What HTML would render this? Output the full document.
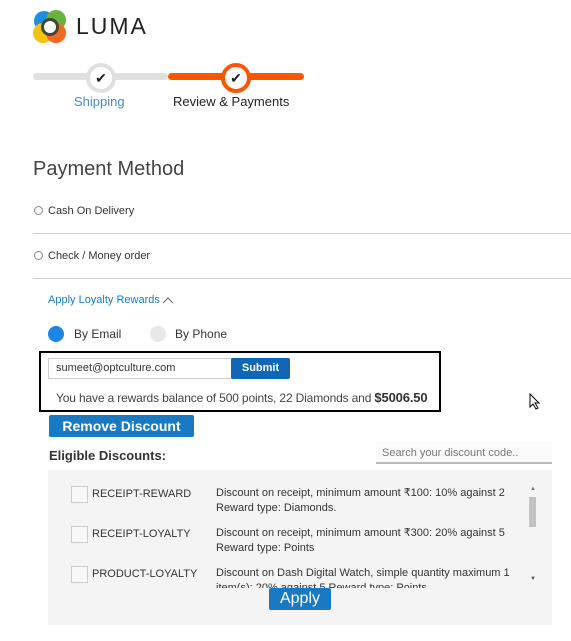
<!DOCTYPE html>
<html><head><style>
body{margin:0;width:571px;height:641px;background:#fff;font-family:"Liberation Sans",sans-serif;position:relative;overflow:hidden;color:#333}
.a{position:absolute;white-space:nowrap}
.sm{font-size:11px}
</style></head><body>
<!-- logo -->
<svg class="a" style="left:33px;top:10px" width="34" height="34" viewBox="0 0 34 34">
<circle cx="11" cy="11" r="10" fill="#1f8ee0"/><circle cx="23" cy="10" r="10" fill="#6ab23f"/>
<circle cx="10" cy="23" r="10" fill="#f4c312"/><circle cx="23" cy="23" r="10" fill="#f26a22"/>
<circle cx="17" cy="17" r="9" fill="#3a4a3a"/><circle cx="17" cy="17" r="6" fill="#fff"/>
</svg>
<div class="a" style="left:76px;top:13px;font-size:23px;letter-spacing:2px;color:#222">LUMA</div>
<!-- progress -->
<div class="a" style="left:33px;top:73px;width:135px;height:7px;background:#e0e0e0;border-radius:4px"></div>
<div class="a" style="left:168px;top:73px;width:136px;height:7px;background:#ff5500;border-radius:4px"></div>
<div class="a" style="left:86px;top:63px;width:22px;height:22px;border-radius:50%;background:#fff;border:4px solid #e0e0e0;text-align:center;line-height:22px;font-size:14px;color:#222">✔</div>
<div class="a" style="left:221px;top:63px;width:22px;height:22px;border-radius:50%;background:#fff;border:4px solid #ff5500;text-align:center;line-height:22px;font-size:14px;color:#222">✔</div>
<div class="a" style="left:74px;top:94px;font-size:13px;color:#4e8bc2">Shipping</div>
<div class="a" style="left:173px;top:94px;font-size:13px;color:#222">Review &amp; Payments</div>
<div class="a" style="left:33px;top:158px;font-size:20px;color:#444">Payment Method</div>
<div class="a" style="left:34px;top:206px;width:7px;height:7px;border:1px solid #888;border-radius:50%"></div>
<div class="a sm" style="left:48px;top:205px">Cash On Delivery</div>
<div class="a" style="left:33px;top:233px;width:538px;height:1px;background:#ccc"></div>
<div class="a" style="left:34px;top:251px;width:7px;height:7px;border:1px solid #888;border-radius:50%"></div>
<div class="a sm" style="left:48px;top:250px">Check / Money order</div>
<div class="a" style="left:33px;top:278px;width:538px;height:1px;background:#ccc"></div>
<div class="a sm" style="left:48px;top:294px;color:#1979c3">Apply Loyalty Rewards</div>
<svg class="a" style="left:162px;top:296px" width="12" height="8" viewBox="0 0 12 8"><path d="M1 7 L6 2 L11 7" fill="none" stroke="#777" stroke-width="1.2"/></svg>
<div class="a" style="left:48px;top:326px;width:16px;height:16px;border-radius:50%;background:#1a86e8"></div>
<div class="a" style="left:74px;top:327px;font-size:12px">By Email</div>
<div class="a" style="left:150px;top:326px;width:16px;height:16px;border-radius:50%;background:#e8e8e8"></div>
<div class="a" style="left:175px;top:327px;font-size:12px">By Phone</div>
<!-- box -->
<div class="a" style="left:39px;top:351px;width:398px;height:57px;border:2px solid #000"></div>
<div class="a" style="left:48px;top:358px;width:184px;height:21px;border:1px solid #ccc;box-sizing:border-box;font-size:11px;line-height:19px;padding-left:7px">sumeet@optculture.com</div>
<div class="a" style="left:231px;top:358px;width:59px;height:21px;background:#1165b5;border-radius:2px;color:#fff;font-size:11px;font-weight:bold;text-align:center;line-height:21px">Submit</div>
<div class="a" style="left:56px;top:390px;font-size:12px;color:#444;letter-spacing:-0.15px">You have a rewards balance of 500 points, 22 Diamonds and <b style="font-size:13px;color:#333">$5006.50</b></div>
<div class="a" style="left:49px;top:415px;width:145px;height:22px;background:#1979c3;border-radius:2px;color:#fff;font-size:14px;font-weight:bold;text-align:center;line-height:22px">Remove Discount</div>
<div class="a" style="left:49px;top:448px;font-size:13px;font-weight:bold;color:#333">Eligible Discounts:</div>
<div class="a" style="left:376px;top:442px;width:176px;height:22px;background:#fafafa;border-bottom:2px solid #bbb;box-sizing:border-box;font-size:11px;color:#777;padding-left:6px;line-height:22px">Search your discount code..</div>
<!-- panel -->
<div class="a" style="left:48px;top:470px;width:504px;height:155px;background:#f4f4f4"></div>
<div class="a" style="left:71px;top:486px;width:15px;height:15px;border:1px solid #ccc;background:#f8f8f8"></div>
<div class="a sm" style="left:92px;top:488px">RECEIPT-REWARD</div>
<div class="a sm" style="left:216px;top:486px;line-height:15px">Discount on receipt, minimum amount ₹100: 10% against 2<br>Reward type: Diamonds.</div>
<div class="a" style="left:71px;top:526px;width:15px;height:15px;border:1px solid #ccc;background:#f8f8f8"></div>
<div class="a sm" style="left:92px;top:528px">RECEIPT-LOYALTY</div>
<div class="a sm" style="left:216px;top:526px;line-height:15px">Discount on receipt, minimum amount ₹300: 20% against 5<br>Reward type: Points</div>
<div class="a" style="left:71px;top:566px;width:15px;height:15px;border:1px solid #ccc;background:#f8f8f8"></div>
<div class="a sm" style="left:92px;top:568px">PRODUCT-LOYALTY</div>
<div class="a sm" style="left:216px;top:566px;line-height:15px;height:22px;overflow:hidden">Discount on Dash Digital Watch, simple quantity maximum 1<br>item(s): 20% against 5 Reward type: Points</div>
<div class="a" style="left:529px;top:497px;width:7px;height:30px;background:#c1c1c1"></div>
<div class="a" style="left:530px;top:486px;font-size:6px;color:#777">▲</div>
<div class="a" style="left:530px;top:576px;font-size:6px;color:#555">▼</div>
<div class="a" style="left:269px;top:588px;width:62px;height:22px;background:#1979c3;border-radius:2px;color:#fff;font-size:16px;text-align:center;line-height:22px">Apply</div>
<svg class="a" style="left:529px;top:393px" width="12" height="17" viewBox="0 0 12 17"><path d="M1 1 L1 14 L4 11 L7 16 L9 15 L6 10 L10 10 Z" fill="#fff" stroke="#000" stroke-width="1"/></svg>
</body></html>
